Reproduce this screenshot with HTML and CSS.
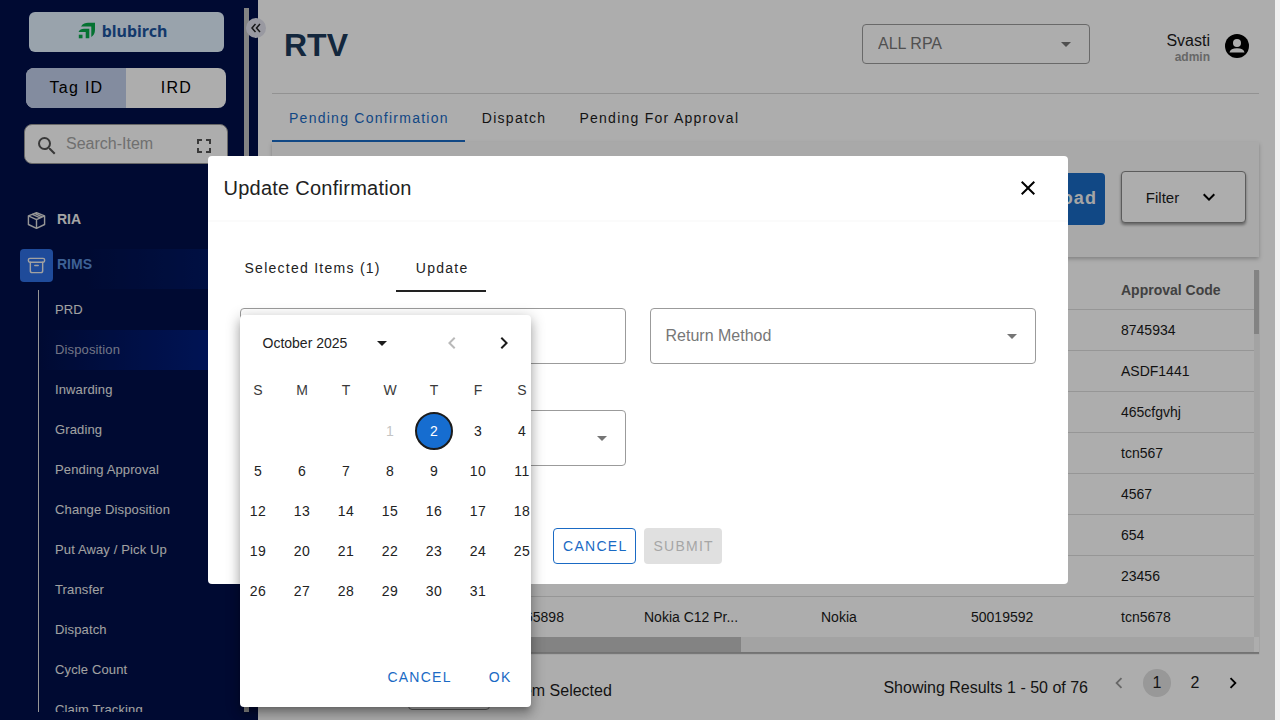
FILE: index.html
```html
<!DOCTYPE html>
<html lang="en">
<head>
<meta charset="utf-8">
<title>RTV</title>
<link rel="stylesheet" href="styles.css">
</head>
<body>
<div class="app">
  <aside class="sidebar">
    <div class="sidebar-scroll">
      <a class="logo" href="#">
        <svg width="18" height="18" viewBox="0 0 18 18" fill="#08a84b"><path d="M3 4.500C5 1.500 7.500 .8 10 .8H17V8C17 11.500 15.500 13.500 13.300 15V4.500Z"/><path d="M.5 10C1.500 7.500 3.500 6.700 6 6.700H11.300V16.300H7.700V10Z"/><path d="M.8 12.700H4.500V16.300H.8Z"/></svg>
        <span>blubirch</span>
      </a>
      <div class="toggle">
        <button class="toggle-btn selected">Tag ID</button>
        <button class="toggle-btn">IRD</button>
      </div>
      <label class="search">
        <svg width="24" height="24" viewBox="0 0 24 24" fill="#555"><path d="M15.500 14h-.79l-.28-.27A6.470 6.470 0 0 0 16 9.500 6.500 6.500 0 1 0 9.500 16c1.610 0 3.090-.59 4.230-1.570l.27.28v.79l5 4.990L20.490 19l-4.990-5zm-6 0C7.010 14 5 11.990 5 9.500S7.010 5 9.500 5 14 7.010 14 9.500 11.990 14 9.500 14z"/></svg>
        <input type="text" placeholder="Search-Item" aria-label="Search item">
        <svg width="24" height="24" viewBox="0 0 24 24" fill="none" stroke="#555" stroke-width="2"><path d="M6 10V6h4M14 6h4v4M18 14v4h-4M10 18H6v-4"/></svg>
      </label>
      <nav class="menu">
        <a class="menu-top" href="#">
          <span class="menu-icon"><svg width="19" height="19" viewBox="0 0 20 20" fill="none" stroke="#ddd" stroke-width="1.500" stroke-linejoin="round" stroke-linecap="round"><path d="M10 1.700 18.500 5.200V14.200L10 18.300 1.500 14.200V5.200ZM1.500 5.200 10 9 18.500 5.200M10 9V18.300M5.500 3.500 14 7.200M8 2.600 16 6.200"/></svg></span>
          RIA
        </a>
        <a class="menu-top open" href="#">
          <span class="menu-icon"><svg width="19" height="19" viewBox="0 0 20 20" fill="none" stroke="#eee" stroke-width="1.500" stroke-linejoin="round" stroke-linecap="round"><rect x="1.500" y="2.500" width="17" height="4" rx="1.500"/><path d="M3.500 6.500V15.500Q3.500 17.500 5.500 17.500H14.500Q16.500 17.500 16.500 15.500V6.500M8.200 10H11.800"/></svg></span>
          RIMS
        </a>
        <div class="submenu">
          <a href="#">PRD</a>
          <a class="current" href="#">Disposition</a>
          <a href="#">Inwarding</a>
          <a href="#">Grading</a>
          <a href="#">Pending Approval</a>
          <a href="#">Change Disposition</a>
          <a href="#">Put Away / Pick Up</a>
          <a href="#">Transfer</a>
          <a href="#">Dispatch</a>
          <a href="#">Cycle Count</a>
          <a href="#">Claim Tracking</a>
        </div>
      </nav>
    </div>
    <div class="sidebar-rail"></div>
    <button class="collapse" aria-label="Collapse sidebar"><svg width="12" height="12" viewBox="0 0 12 12" fill="none" stroke="#222" stroke-width="1.500"><path d="M5.500 2 2 6l3.500 4M10 2 6.500 6l3.500 4"/></svg></button>
  </aside>

  <main class="main">
    <header class="header">
      <h1>RTV</h1>
      <div class="select-box rpa">
        <select aria-label="RPA"><option>ALL RPA</option></select>
        <svg class="caret" width="24" height="24" viewBox="0 0 24 24"><path d="m7 10 5 5 5-5z"/></svg>
      </div>
      <div class="user">
        <div class="user-name">Svasti</div>
        <div class="user-role">admin</div>
      </div>
      <svg class="avatar" width="24" height="24" viewBox="0 0 24 24"><circle cx="12" cy="12" r="12"/><circle cx="12" cy="9" r="4" fill="#fff"/><path d="M4.500 18.500Q5.500 14.300 12 14.300T19.500 18.500Z" fill="#fff"/></svg>
    </header>
    <nav class="tabs">
      <button class="tab active">Pending Confirmation</button>
      <button class="tab">Dispatch</button>
      <button class="tab">Pending For Approval</button>
    </nav>
    <section class="panel">
      <button class="download">Download</button>
      <button class="filter">Filter <svg width="24" height="24" viewBox="0 0 24 24"><path d="M7.410 8.590 12 13.170l4.590-4.580L18 10l-6 6-6-6z"/></svg></button>
    </section>
    <section class="table-box">
      <div class="table-view">
        <table class="grid">
          <colgroup><col class="c-wide"><col class="c-id"><col class="c-name"><col class="c-std"><col class="c-std"><col></colgroup>
          <thead><tr><th></th><th></th><th></th><th></th><th></th><th>Approval Code</th></tr></thead>
          <tbody>
            <tr><td></td><td></td><td></td><td></td><td></td><td>8745934</td></tr>
            <tr><td></td><td></td><td></td><td></td><td></td><td>ASDF1441</td></tr>
            <tr><td></td><td></td><td></td><td></td><td></td><td>465cfgvhj</td></tr>
            <tr><td></td><td></td><td></td><td></td><td></td><td>tcn567</td></tr>
            <tr><td></td><td></td><td></td><td></td><td></td><td>4567</td></tr>
            <tr><td></td><td></td><td></td><td></td><td></td><td>654</td></tr>
            <tr><td></td><td></td><td></td><td></td><td></td><td>23456</td></tr>
            <tr><td></td><td>65898</td><td>Nokia C12 Pr...</td><td>Nokia</td><td>50019592</td><td>tcn5678</td></tr>
          </tbody>
        </table>
        <div class="v-rail"><div class="v-thumb"></div></div>
      </div>
      <div class="h-rail"><div class="h-thumb"></div></div>
    </section>
    <footer class="footer">
      <button class="page-size" aria-label="Rows per page"></button>
      <span class="picked">Item Selected</span>
      <span class="results">Showing Results 1 - 50 of 76</span>
      <div class="pages">
        <button class="page" disabled aria-label="Previous"><svg width="22" height="22" viewBox="0 0 24 24"><path d="M15.410 7.410 14 6l-6 6 6 6 1.410-1.410L10.830 12z"/></svg></button>
        <button class="page on">1</button>
        <button class="page">2</button>
        <button class="page" aria-label="Next"><svg width="22" height="22" viewBox="0 0 24 24"><path d="M10 6 8.590 7.410 13.170 12l-4.580 4.590L10 18l6-6z"/></svg></button>
      </div>
    </footer>
  </main>

  <div class="backdrop">
    <div class="modal" role="dialog" aria-label="Update Confirmation">
      <header class="modal-head">
        <h2>Update Confirmation</h2>
        <button class="close" aria-label="Close"><svg width="24" height="24" viewBox="0 0 24 24"><path d="M19 6.410 17.590 5 12 10.590 6.410 5 5 6.410 10.590 12 5 17.590 6.410 19 12 13.410 17.590 19 19 17.590 13.410 12z"/></svg></button>
      </header>
      <div class="modal-body">
        <nav class="modal-tabs">
          <button class="tab">Selected Items (1)</button>
          <button class="tab active">Update</button>
        </nav>
        <div class="form">
          <div class="date-field">
            <input class="field" type="text" aria-label="Date">
            <div class="picker">
              <div class="picker-head">
                <span class="month">October 2025</span>
                <button class="icon-btn year" aria-label="Choose year"><svg width="24" height="24" viewBox="0 0 24 24"><path d="m7 10 5 5 5-5z"/></svg></button>
                <button class="icon-btn" disabled aria-label="Previous month"><svg width="24" height="24" viewBox="0 0 24 24"><path d="M15.410 7.410 14 6l-6 6 6 6 1.410-1.410L10.830 12z"/></svg></button>
                <button class="icon-btn" aria-label="Next month"><svg width="24" height="24" viewBox="0 0 24 24"><path d="M10 6 8.590 7.410 13.170 12l-4.580 4.590L10 18l6-6z"/></svg></button>
              </div>
              <div class="week">
                <span>S</span><span>M</span><span>T</span><span>W</span><span>T</span><span>F</span><span>S</span>
              </div>
              <div class="days">
                <button class="first" disabled>1</button><button class="chosen">2</button><button>3</button><button>4</button>
                <button>5</button><button>6</button><button>7</button><button>8</button><button>9</button><button>10</button><button>11</button>
                <button>12</button><button>13</button><button>14</button><button>15</button><button>16</button><button>17</button><button>18</button>
                <button>19</button><button>20</button><button>21</button><button>22</button><button>23</button><button>24</button><button>25</button>
                <button>26</button><button>27</button><button>28</button><button>29</button><button>30</button><button>31</button>
              </div>
              <div class="picker-actions"><button>CANCEL</button><button>OK</button></div>
            </div>
          </div>
          <div class="select-box">
            <select class="field" aria-label="Return Method"><option>Return Method</option></select>
            <svg class="caret" width="24" height="24" viewBox="0 0 24 24"><path d="m7 10 5 5 5-5z"/></svg>
          </div>
          <div class="select-box">
            <select class="field" aria-label="Option"><option></option></select>
            <svg class="caret" width="24" height="24" viewBox="0 0 24 24"><path d="m7 10 5 5 5-5z"/></svg>
          </div>
        </div>
        <div class="modal-actions">
          <button class="btn outline">CANCEL</button>
          <button class="btn" disabled>SUBMIT</button>
        </div>
      </div>
    </div>
  </div>
  <div class="page-rail"></div>
</div>
</body>
</html>
```
FILE: styles.css
```css
* { box-sizing: border-box; }
body { margin: 0; font-family: "Liberation Sans", Arial, sans-serif; color: #1c1c1c; }
button, input, select { font: inherit; color: inherit; margin: 0; }
button { border: 0; background: none; padding: 0; cursor: pointer; }
a { color: inherit; text-decoration: none; }
svg { display: block; flex: none; }
h1, h2 { margin: 0; }

.app { position: relative; display: flex; height: 100vh; overflow: hidden; }
.page-rail { width: 5px; background: #f1f1f1; }

/* Sidebar */
.sidebar { position: relative; flex: none; display: flex; width: 258px; padding: 8px 9px 8px 20px; background: #00104b; }
.sidebar-scroll { flex: 1; min-height: 0; overflow: hidden; padding-top: 4px; }
.sidebar-rail { width: 5px; background: #c1c1c1; }
.collapse { position: absolute; top: 18px; right: -8px; z-index: 1; display: grid; place-items: center; width: 20px; height: 20px; border-radius: 50%; background: #e2e2ee; }
.logo { display: flex; align-items: center; justify-content: center; gap: 6px; height: 40px; margin: 0 20px 0 9px; padding: 0 8px 2px 0; border-radius: 6px; background: #e2f0fe; color: #1c559e; font: bold 16px "Noto Sans", sans-serif; }
.toggle { display: flex; height: 40px; margin: 16px 18px 0 6px; border-radius: 8px; background: #fff; overflow: hidden; }
.toggle-btn { flex: 1; padding-left: 1px; font-size: 16px; letter-spacing: 0.08em; color: #000; }
.toggle-btn.selected { background: #c2ceea; }
.search { display: flex; align-items: center; height: 40px; margin: 16px 16px 0 4px; padding: 0 11px 0 10px; border: 1px solid #999; border-radius: 8px; background: #fff; }
.search svg { margin-top: 3px; }
.search input { flex: 1; min-width: 0; margin-left: 7px; padding: 0; border: 0; outline: 0; background: none; font-size: 16px; }
.search input::placeholder { color: #a5a5a5; opacity: 1; }
.menu { margin-top: 40px; }
.menu-top { display: flex; gap: 4px; height: 40px; margin-bottom: 5px; line-height: 30px; font-size: 14px; font-weight: bold; color: #f2f2f2; }
.menu-top.open { margin-bottom: 0; color: #5b8fdc; background: linear-gradient(90deg, #00104b 30%, #001a6a); }
.menu-icon { display: grid; place-items: center; width: 33px; height: 33px; border-radius: 4px; }
.open .menu-icon { background: #2f6fe4; }
.submenu { margin: 1px 0 0 18px; border-left: 1px solid #ddd; }
.submenu a { display: block; height: 40px; padding-left: 16px; line-height: 40px; font-size: 13px; letter-spacing: 0.01em; color: #eee; }
.submenu .current { color: #a9adc4; background: linear-gradient(90deg, #00104b, #002088); }

/* Page */
.main { flex: 1; min-width: 0; display: flex; flex-direction: column; padding: 0 16px 0 14px; }
.header { display: flex; align-items: center; height: 94px; padding: 0 10px 5px 12px; border-bottom: 1px solid #d8d8d8; }
.header h1 { flex: 1; padding-top: 2px; font-size: 32px; color: #1c3a5a; }
.select-box { position: relative; }
.select-box select { appearance: none; width: 100%; height: 100%; padding: 0 15px 2px; border: 1px solid #9b9b9b; border-radius: 4px; background: none; font-size: 16px; color: #777; }
.caret { position: absolute; top: 0; bottom: 0; right: 12px; margin: auto; fill: #757575; pointer-events: none; }
.rpa { width: 228px; height: 40px; }
.user { width: 120px; text-align: right; padding-top: 7px; }
.user-name { font-size: 16px; line-height: 18px; }
.user-role { font-size: 12px; line-height: 14px; font-weight: bold; color: #999; }
.avatar { margin-left: 15px; margin-top: 4px; }

.tab { position: relative; height: 48px; padding: 2px 16px 0; font-size: 14px; letter-spacing: 0.09em; border-bottom: 2px solid transparent; }
.tabs { display: flex; }
.tabs .tab { padding: 2px 16px 0 17px; }
.tabs .active { color: #1a6ac4; border-color: #1a6ac4; }
.panel { display: flex; justify-content: flex-end; align-items: flex-start; gap: 16px; height: 115px; padding: 29px 13px 0; background: #f9f9f9; box-shadow: 0 2px 4px rgba(0, 0, 0, .25); }
.download { height: 52px; margin-top: 2px; padding: 0 8px 2px 14px; border-radius: 4px; background: #1a6ac4; color: #f4f4f4; font-size: 18px; font-weight: bold; letter-spacing: 0.06em; }
.filter { display: flex; align-items: center; justify-content: center; gap: 18px; width: 125px; height: 52px; border: 1px solid #888; border-radius: 4px; background: #fff; font-size: 15px; box-shadow: 0 2px 3px rgba(0, 0, 0, .4); }

.table-box { margin-top: 13px; border-bottom: 1px solid #aaa; box-shadow: 0 1px 1px rgba(0, 0, 0, .3); }
.table-view { display: flex; }
.grid { flex: 1; table-layout: fixed; width: 100%; border-collapse: separate; border-spacing: 0; font-size: 14px; line-height: 20px; text-align: left; color: #1a1a1a; }
.grid th, .grid td { height: 41px; padding: 0 16px; border-bottom: 1px solid #dedede; white-space: nowrap; }
.grid th { height: 40px; color: #616161; }
.grid tr:last-child td { height: 40px; border-bottom: 0; }
.c-wide { width: 237px; }
.c-id { width: 119px; }
.c-name { width: 177px; }
.c-std { width: 150px; }
.v-rail { width: 5px; background: #f1f1f1; }
.v-thumb { height: 64px; background: #c1c1c1; }
.h-rail { height: 15px; margin-right: 5px; background: #f1f1f1; }
.h-thumb { width: 469px; height: 15px; background: #c1c1c1; }
.footer { display: flex; align-items: flex-start; padding-top: 15px; font-size: 16px; }
.page-size { width: 82px; height: 40px; margin: 2px 24px 0 136px; border: 1px solid #888; border-radius: 4px; }
.picked { line-height: 46px; }
.results { margin-left: auto; line-height: 40px; }
.pages { display: flex; gap: 10px; margin-left: 17px; padding: 1px 12px 0 0; }
.page { display: grid; place-items: center; width: 28px; height: 28px; border-radius: 50%; }
.page.on { background: #e0e0e0; }
.page:disabled { opacity: .4; }

/* Dialog */
.backdrop { position: absolute; inset: 0 5px 0 0; z-index: 2; display: flex; align-items: center; justify-content: center; padding-top: 20px; background: rgba(0, 0, 0, .32); }
.modal { width: 860px; max-width: 90%; border-radius: 4px; background: #fff; color: #222; }
.modal-head { display: flex; align-items: center; justify-content: space-between; height: 66px; padding: 0 28px 0 16px; border-bottom: 2px solid #fbfbfb; }
.modal-head h2 { font-size: 20px; font-weight: normal; letter-spacing: 0.0125em; }
.modal-body { padding: 22px 32px 20px; }
.modal-tabs { display: flex; }
.modal-tabs .tab { padding: 2px 17px 0 20px; }
.modal-tabs .tab:first-child { padding: 2px 15px 0 5px; }
.modal-tabs .active { border-color: #222; }
.form { display: grid; grid-template-columns: 1fr 1fr; gap: 46px 24px; margin-top: 16px; }
.form .select-box { height: 56px; }
.date-field { position: relative; height: 56px; }
.date-field .field { width: 100%; height: 100%; border: 1px solid #9b9b9b; border-radius: 4px; }
.modal-actions { display: flex; justify-content: center; gap: 8px; margin-top: 62px; }
.btn { height: 36px; padding: 0 8px 0 9px; border: 1px solid transparent; border-radius: 4px; font-size: 14px; letter-spacing: 0.09em; }
.btn.outline { border-color: #1a6ac4; color: #1a6ac4; }
.btn:disabled { border: 0; background: #e0e0e0; color: #a6a6a6; }

/* Date picker */
.picker { position: absolute; top: 7px; left: 0; z-index: 3; width: 291px; height: 392px; display: flex; flex-direction: column; overflow: hidden; border-radius: 4px; background: #fff; font-size: 14px; box-shadow: 0 5px 5px -3px rgba(0, 0, 0, .2), 0 8px 10px 1px rgba(0, 0, 0, .14), 0 3px 14px 2px rgba(0, 0, 0, .2); }
.picker-head { display: flex; align-items: center; padding: 16px 15px 16px 23px; }
.month { flex: 1; white-space: nowrap; }
.icon-btn { margin-left: 28px; fill: #1c1c1c; }
.icon-btn.year { margin: 0 18px 0 0; }
.icon-btn:disabled { opacity: .3; }
.week, .days { display: grid; grid-template-columns: repeat(7, 44px); margin-left: -4px; }
.week span { padding-left: 1px; line-height: 38px; text-align: center; color: #3a3a3a; }
.days { grid-auto-rows: 40px; place-items: center; margin-top: 2px; }
.days button { width: 38px; height: 38px; padding-left: 1px; border-radius: 50%; letter-spacing: 0.03em; }
.days .first { grid-column: 4; }
.days button:disabled { color: #c4c4c4; }
.days .chosen { border: 2px solid #1c1c1c; background: #166dd0; color: #fff; }
.picker-actions { display: flex; justify-content: flex-end; gap: 37px; margin: auto 19px 12px; color: #1a6ac4; }
.picker-actions button { height: 36px; letter-spacing: 0.09em; }
```
